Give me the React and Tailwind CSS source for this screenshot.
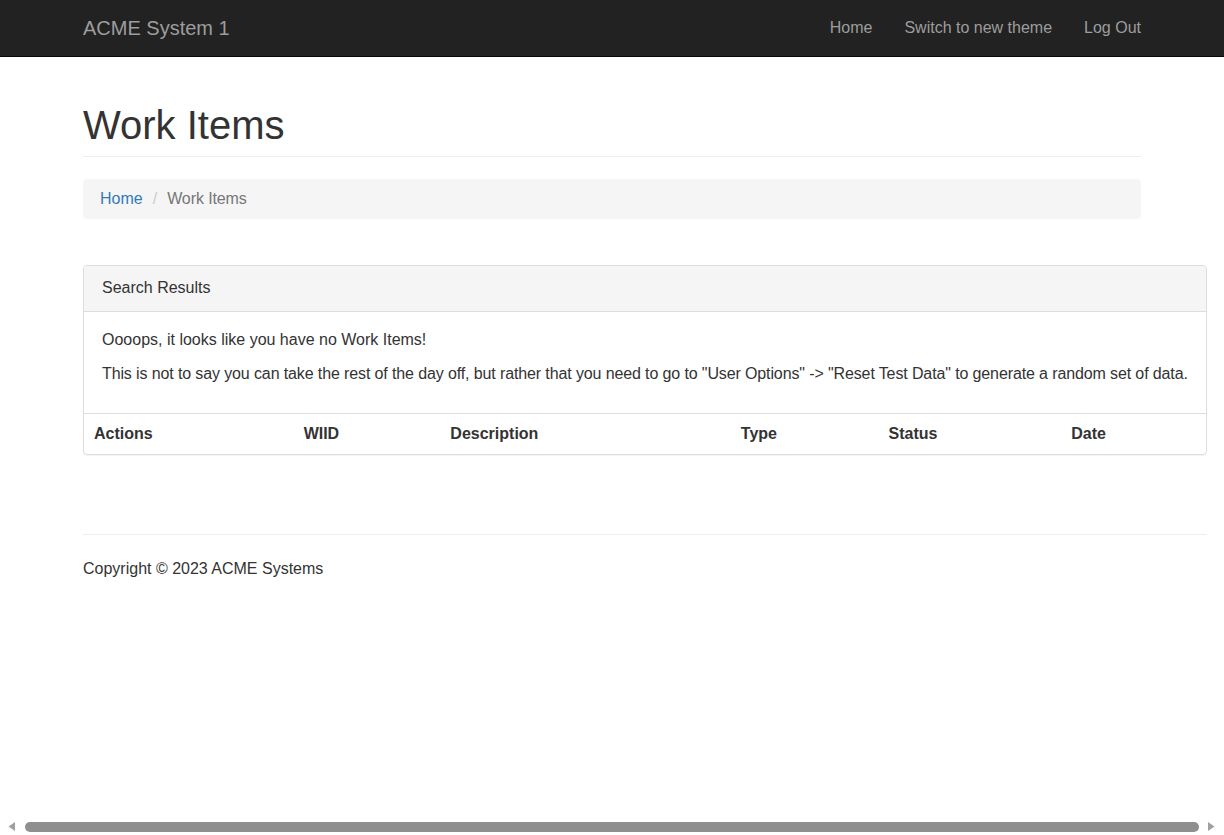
// App.jsx
const columns = [
  { label: 'Actions', w: 'w-[210px]' },
  { label: 'WIID', w: 'w-[147px]' },
  { label: 'Description', w: 'w-[291px]' },
  { label: 'Type', w: 'w-[148px]' },
  { label: 'Status', w: 'w-[183px]' },
  { label: 'Date', w: 'w-[145px]' },
];

function Navbar() {
  return (
    <nav className="h-[57px] bg-[#222222] border-b border-[#080808]">
      <div className="w-[1058px] mx-auto h-[56px] flex items-center justify-between">
        <a className="text-[20px] text-[#9d9d9d] leading-none">ACME System 1</a>
        <ul className="flex items-center gap-[32px] text-[16px] text-[#9d9d9d]">
          <li>Home</li>
          <li>Switch to new theme</li>
          <li>Log Out</li>
        </ul>
      </div>
    </nav>
  );
}

function FakeScrollbar() {
  return (
    <div className="fixed bottom-0 left-0 right-0 h-[17px] bg-white flex items-center">
      <svg width="17" height="17" viewBox="0 0 17 17" className="shrink-0">
        <path d="M15 4 L15 13 L8.5 8.5 Z" fill="#a0a0a0" />
      </svg>
      <div className="ml-[8px] w-[1174px] h-[10px] rounded-full bg-[#8f8f8f]" />
      <div className="flex-1" />
      <svg width="17" height="17" viewBox="0 0 17 17" className="shrink-0">
        <path d="M1 4 L1 13 L7.5 8.5 Z" fill="#a0a0a0" />
      </svg>
    </div>
  );
}

export default function App() {
  return (
    <div className="bg-white text-[#333333] text-[16px] leading-[24px]" style={{ fontFamily: '"Liberation Sans", Arial, sans-serif' }}>
      <Navbar />

      <div className="w-[1058px] mx-auto">
        <div className="mt-[46px] pb-[9px] border-b border-[#eeeeee]">
          <h1 className="text-[40px] leading-[44px] font-normal">Work Items</h1>
        </div>

        <ol className="mt-[22px] flex items-center bg-[#f5f5f5] rounded-[4px] px-[17px] py-[8px]">
          <li className="text-[#337ab7]">Home</li>
          <li className="text-[#cccccc] px-[10px]">/</li>
          <li className="text-[#777777] tracking-[-0.1px]">Work Items</li>
        </ol>

        <div className="mt-[46px] w-[1124px] border border-[#dddddd] rounded-[4px] shadow-[0_1px_1px_rgba(0,0,0,0.05)]">
          <div className="bg-[#f5f5f5] border-b border-[#dddddd] px-[18px] pt-[10px] pb-[11px] rounded-t-[3px]">
            Search Results
          </div>
          <div className="px-[18px] pt-[16px] pb-[17px] whitespace-nowrap">
            <p className="mb-[10px]">Oooops, it looks like you have no Work Items!</p>
            <p className="mb-[10px] tracking-[-0.12px]">
              This is not to say you can take the rest of the day off, but rather that you need to go to "User Options" -&gt; "Reset Test Data" to generate a random set of data.
            </p>
          </div>
          <table className="w-full border-t border-[#dddddd] border-collapse">
            <thead>
              <tr>
                {columns.map(c => (
                  <th key={c.label} className={`${c.w} text-left font-bold px-[10px] py-[8px]`}>
                    {c.label}
                  </th>
                ))}
              </tr>
            </thead>
          </table>
        </div>

        <footer className="w-[1124px]">
          <hr className="mt-[79px] border-t border-[#eeeeee]" />
          <p className="mt-[22px] pb-[60px]">Copyright © 2023 ACME Systems</p>
        </footer>
      </div>

      <FakeScrollbar />
    </div>
  );
}
